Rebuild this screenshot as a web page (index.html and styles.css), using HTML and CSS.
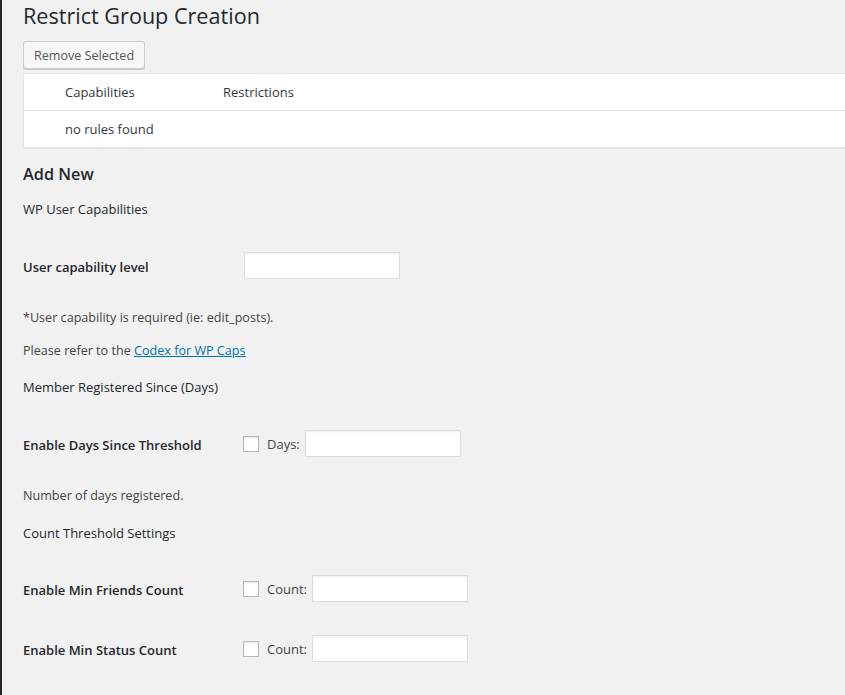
FILE: index.html
```html
<!DOCTYPE html>
<html lang="en">
<head>
<meta charset="utf-8">
<title>Restrict Group Creation</title>
<link rel="stylesheet" href="styles.css">
</head>
<body>
<div class="wrap">
  <h1 class="page-title">Restrict Group Creation</h1>
  <button class="button" type="button">Remove Selected</button>
  <div class="rules-table">
    <div class="rules-row rules-head">
      <span class="col-check"></span>
      <span class="col-cap">Capabilities</span>
      <span class="col-res">Restrictions</span>
    </div>
    <div class="rules-row">
      <span class="col-check"></span>
      <span class="col-cap">no rules found</span>
    </div>
  </div>

  <h2 class="section-title">Add New</h2>
  <h3 class="subhead first">WP User Capabilities</h3>

  <div class="form-row row-cap">
    <label class="row-label">User capability level</label>
    <div class="row-field"><input class="text-input" type="text"></div>
  </div>
  <p class="desc desc-required">*User capability is required (ie: edit_posts).</p>
  <p class="desc desc-refer">Please refer to the <a href="#">Codex for WP Caps</a></p>

  <h3 class="subhead sub-member">Member Registered Since (Days)</h3>
  <div class="form-row row-days">
    <label class="row-label">Enable Days Since Threshold</label>
    <div class="row-field">
      <span class="check"></span>
      <span class="field-label">Days:</span>
      <input class="text-input" type="text">
    </div>
  </div>
  <p class="desc desc-days">Number of days registered.</p>

  <h3 class="subhead sub-count">Count Threshold Settings</h3>
  <div class="form-row row-friends">
    <label class="row-label">Enable Min Friends Count</label>
    <div class="row-field">
      <span class="check"></span>
      <span class="field-label">Count:</span>
      <input class="text-input" type="text">
    </div>
  </div>
  <div class="form-row row-status">
    <label class="row-label">Enable Min Status Count</label>
    <div class="row-field">
      <span class="check"></span>
      <span class="field-label">Count:</span>
      <input class="text-input" type="text">
    </div>
  </div>
</div>
</body>
</html>
```

FILE: styles.css
```css
* { box-sizing: border-box; }
html, body {
  margin: 0;
  padding: 0;
  background: #f1f1f1;
  height: 100%;
  overflow: hidden;
}
body {
  border-left: 2px solid #23282d;
  font-family: "Open Sans", "Noto Sans", sans-serif;
  font-size: 13px;
  color: #444;
}
.wrap {
  padding-left: 21px;
}
.page-title {
  margin: 1px 0 0;
  font-size: 21.6px;
  line-height: 29px;
  font-weight: 400;
  color: #23282d;
}
.button {
  display: block;
  margin-top: 11px;
  height: 28px;
  width: 122px;
  padding: 0;
  font-family: inherit;
  font-size: 12.6px;
  color: #555;
  background: #f7f7f7;
  border: 1px solid #ccc;
  border-radius: 3px;
  box-shadow: 0 1px 0 #ccc;
}
.rules-table {
  margin-top: 4px;
  background: #fff;
  border: 1px solid #e5e5e5;
  border-right: none;
  box-shadow: 0 1px 1px rgba(0,0,0,.04);
}
.rules-row {
  display: flex;
  align-items: center;
  height: 36px;
  color: #32373c;
}
.rules-head {
  height: 37px;
  border-bottom: 1px solid #e1e1e1;
}
.col-check { width: 41px; }
.col-cap { width: 158px; }
.section-title {
  margin: 14px 0 0;
  font-size: 16.3px;
  line-height: 24px;
  font-weight: 600;
  color: #23282d;
}
.subhead {
  margin: 0;
  font-size: 13px;
  line-height: 20px;
  font-weight: 400;
  color: #23282d;
}
.subhead.first { margin-top: 13px; }
.sub-member { margin-top: 16px; }
.sub-count { margin-top: 17px; }
.form-row {
  display: flex;
  align-items: flex-start;
}
.row-cap { margin-top: 33px; }
.row-days { margin-top: 33px; }
.row-friends { margin-top: 32px; }
.row-status { margin-top: 33px; }
.row-label {
  width: 221px;
  margin-top: 5px;
  font-size: 13px;
  line-height: 20px;
  font-weight: 600;
  color: #23282d;
}
.row-field {
  display: flex;
  align-items: center;
}
.text-input {
  width: 156px;
  height: 27px;
  margin: 0;
  padding: 3px 5px;
  background: #fff;
  border: 1px solid #ddd;
  box-shadow: inset 0 1px 2px rgba(0,0,0,.07);
  font-family: inherit;
  font-size: 14px;
}
.row-days .row-field,
.row-friends .row-field,
.row-status .row-field { margin-left: -1px; }
.check {
  display: block;
  width: 16px;
  height: 16px;
  background: #fff;
  border: 1px solid #b4b9be;
  box-shadow: inset 0 1px 2px rgba(0,0,0,.1);
  margin-top: 1px;
}
.field-label {
  margin-left: 8px;
  margin-right: 5px;
  font-size: 13px;
  line-height: 20px;
  color: #444;
}
.desc {
  margin: 0;
  font-size: 12.6px;
  line-height: 20px;
  color: #444;
}
.desc-required { margin-top: 29px; }
.desc-refer { margin-top: 13px; }
.desc-days { margin-top: 29px; }
.desc a {
  color: #0073aa;
  text-decoration: underline;
}
```
